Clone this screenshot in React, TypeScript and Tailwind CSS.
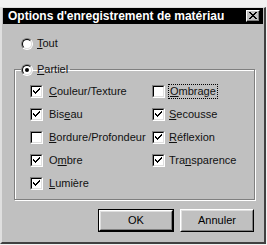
import React from 'react';

const left = [
  { pre: '', key: 'C', post: 'ouleur/Texture', on: true },
  { pre: 'Bis', key: 'e', post: 'au', on: true },
  { pre: '', key: 'B', post: 'ordure/Profondeur', on: false },
  { pre: 'O', key: 'm', post: 'bre', on: true },
  { pre: '', key: 'L', post: 'umière', on: true },
];

const right = [
  { pre: '', key: 'O', post: 'mbrage', on: false, focus: true },
  { pre: '', key: 'S', post: 'ecousse', on: true },
  { pre: '', key: 'R', post: 'éflexion', on: true },
  { pre: 'Tra', key: 'n', post: 'sparence', on: true },
];

function Label({ pre, k, post, focus }: { pre: string; k: string; post: string; focus?: boolean }) {
  return (
    <span className={focus ? 'px-[1px] outline outline-1 outline-dotted outline-black' : ''}>
      {pre}
      <span className="underline underline-offset-[1px]">{k}</span>
      {post}
    </span>
  );
}

function Radio({ on }: { on: boolean }) {
  return (
    <span className="w-[12px] h-[12px] rounded-full border border-t-[#808080] border-l-[#808080] border-r-white border-b-white flex">
      <span className="flex-1 rounded-full border border-t-black border-l-black border-r-[#dfdfdf] border-b-[#dfdfdf] bg-white flex items-center justify-center">
        {on && <span className="w-[4px] h-[4px] rounded-full bg-black" />}
      </span>
    </span>
  );
}

function Check({ on }: { on: boolean }) {
  return (
    <span className="w-[13px] h-[13px] border border-t-[#808080] border-l-[#808080] border-r-white border-b-white flex shrink-0">
      <span className="flex-1 border border-t-black border-l-black border-r-[#dfdfdf] border-b-[#dfdfdf] bg-white flex items-center justify-center">
        {on && (
          <svg width="7" height="7" viewBox="0 0 7 7">
            <path d="M0 2h1v1h1v1h1V3h1V2h1V1h1V0h1v2h-1v1h-1v1h-1v1h-1v1H3V6H2V5H1V4H0z" fill="black" />
          </svg>
        )}
      </span>
    </span>
  );
}

function Button({ label, def }: { label: string; def?: boolean }) {
  return (
    <button
      className={
        'h-[23px] flex ' +
        (def ? 'w-[76px] border border-black' : 'w-[74px]')
      }
    >
      <span className="flex-1 flex border border-t-white border-l-white border-r-black border-b-black">
        <span className="flex-1 flex items-center justify-center border border-t-[#dfdfdf] border-l-[#dfdfdf] border-r-[#808080] border-b-[#808080] bg-[#c0c0c0] text-[11px] text-black">
          {label}
        </span>
      </span>
    </button>
  );
}

export default function App() {
  return (
    <div className="w-[267px] h-[245px] bg-[#f2f2f2] pt-[7px] overflow-hidden font-['Liberation_Sans',Arial,sans-serif]">
      <div className="w-[266px] h-[237px] bg-[#c0c0c0] border-t border-l-2 border-r-2 border-b-2 border-t-[#dfdfdf] border-l-[#dfdfdf] border-r-[#404040] border-b-[#404040] px-[1px] flex flex-col">
        {/* title bar */}
        <div className="h-[16px] bg-black flex items-center justify-between pl-[5px] pr-[3px]">
          <span className="text-white font-bold text-[12px] leading-none">Options d'enregistrement de matériau</span>
          <span className="w-[14px] h-[12px] bg-[#c0c0c0] flex border border-t-white border-l-white border-r-black border-b-black">
            <span className="flex-1 flex items-center justify-center border-r border-b border-[#808080]">
              <svg width="8" height="7" viewBox="0 0 8 7">
                <path d="M0 0h2v1h1v1h2V1h1V0h2v1H7v1H6v1H5v1h1v1h1v1h1v1H6V6H5V5H3v1H2v1H0V6h1V5h1V4h1V3H2V2H1V1H0z" fill="black" />
              </svg>
            </span>
          </span>
        </div>

        {/* body */}
        <div className="flex-1 flex flex-col text-[11px] leading-[13px] text-[#111]">
          <div className="flex items-center gap-[4px] mt-[13px] ml-[18px] h-[13px]">
            <Radio on={false} />
            <Label pre="" k="T" post="out" />
          </div>

          <fieldset className="mt-[13px] ml-[11px] mr-[8px] h-[137px] border border-[#808080] shadow-[inset_1px_1px_0_#fff,1px_1px_0_#fff]">
            <legend className="ml-[6px] pr-[2px] flex items-center gap-[4px] h-[13px]">
              <Radio on={true} />
              <Label pre="" k="P" post="artiel" />
            </legend>
            <div className="grid grid-cols-[122px_1fr] pl-[15px] pt-[4px]">
              <div className="flex flex-col">
                {left.map((r) => (
                  <div key={r.post} className="h-[23px] flex items-center gap-[6px]">
                    <Check on={r.on} />
                    <Label pre={r.pre} k={r.key} post={r.post} />
                  </div>
                ))}
              </div>
              <div className="flex flex-col">
                {right.map((r) => (
                  <div key={r.post} className="h-[23px] flex items-center gap-[4px]">
                    <Check on={r.on} />
                    <Label pre={r.pre} k={r.key} post={r.post} focus={r.focus} />
                  </div>
                ))}
              </div>
            </div>
          </fieldset>

          <div className="flex justify-end gap-[6px] mt-[9px] mr-[9px]">
            <Button label="OK" def />
            <Button label="Annuler" />
          </div>
        </div>
      </div>
    </div>
  );
}
